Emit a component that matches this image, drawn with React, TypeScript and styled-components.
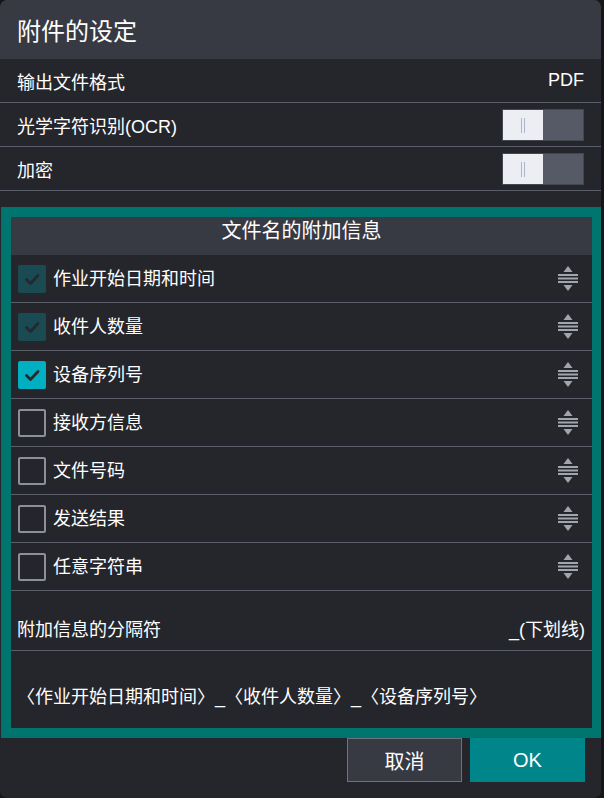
import React from "react";
import styled, { createGlobalStyle } from "styled-components";

const Global = createGlobalStyle`
  html, body { margin: 0; padding: 0; background: #161618; }
  body { font-family: "Liberation Sans", "Noto Sans CJK SC", sans-serif; color: #ffffff; }
`;

const Dialog = styled.div`
  width: 601px;
  height: 798px;
  background: #25262b;
  border-radius: 7px;
  overflow: hidden;
  display: flex;
  flex-direction: column;
`;

const Header = styled.div`
  height: 59px;
  flex: none;
  background: #373a43;
  display: flex;
  align-items: center;
  padding: 0 17px;
  font-size: 24px;
`;

const SettingRow = styled.div`
  height: 43px;
  flex: none;
  border-bottom: 1px solid #5a5e68;
  display: flex;
  align-items: center;
  justify-content: space-between;
  padding: 0 17px 0 17px;
  font-size: 18px;
`;

const Toggle = styled.div`
  width: 82px;
  height: 32px;
  box-sizing: border-box;
  border: 1px solid #434750;
  display: flex;
  background: #555a66;
  margin-top: 1px;
`;

const Thumb = styled.div`
  width: 40px;
  height: 100%;
  background: #eceef4;
  display: flex;
  align-items: center;
  justify-content: center;
  gap: 2px;
  span {
    display: block;
    width: 1px;
    height: 15px;
    background: #a9b5c8;
  }
`;

const Frame = styled.div`
  margin: 16px 0 0 1px;
  width: 601px;
  flex: none;
  box-sizing: border-box;
  border: 10px solid #007570;
  background: #25262b;
  display: flex;
  flex-direction: column;
`;

const FrameHeader = styled.div`
  height: 38px;
  background: #373a43;
  text-align: center;
  font-size: 20px;
  line-height: 29px;
`;

const ItemRow = styled.div`
  height: 47px;
  border-bottom: 1px solid #5a5e68;
  display: flex;
  align-items: center;
  padding: 0 13px 0 7px;
  font-size: 18px;
`;

const Box = styled.div<{ $state: "locked" | "on" | "off" }>`
  width: 28px;
  height: 28px;
  box-sizing: border-box;
  border-radius: 2px;
  flex: none;
  display: flex;
  align-items: center;
  justify-content: center;
  margin-right: 7px;
  background: ${(p) =>
    p.$state === "locked" ? "#1a4b53" : p.$state === "on" ? "#00afc0" : "transparent"};
  border: ${(p) => (p.$state === "off" ? "2px solid #8d9096" : "none")};
`;

const Label = styled.span`
  flex: 1;
  line-height: 24px;
`;

const SepRow = styled.div`
  border-bottom: 1px solid #5a5e68;
  display: flex;
  align-items: center;
  justify-content: space-between;
  padding: 14px 7px 0 6px;
  box-sizing: border-box;
  height: 60px;
  font-size: 18px;
`;

const PreviewRow = styled.div`
  height: 77px;
  box-sizing: border-box;
  display: flex;
  align-items: center;
  padding: 10px 6px 0 6px;
  font-size: 18px;
`;

const Footer = styled.div`
  display: flex;
  justify-content: flex-end;
  gap: 8px;
  padding: 0 16px 0 0;
`;

const Button = styled.button<{ $primary?: boolean }>`
  width: 115px;
  height: 44px;
  box-sizing: border-box;
  font-family: "Liberation Sans", "Noto Sans CJK SC", sans-serif;
  font-size: 20px;
  color: #ffffff;
  border: ${(p) => (p.$primary ? "none" : "1px solid #6e727b")};
  background: ${(p) => (p.$primary ? "#00868a" : "#373a43")};
  padding: 0;
  cursor: pointer;
`;

const Check = ({ color }: { color: string }) => (
  <svg width="28" height="28" viewBox="0 0 28 28">
    <path d="M8.5 14.5 L12.5 18.5 L20 10.5" fill="none" stroke={color} strokeWidth="2.8" strokeLinecap="round" strokeLinejoin="round" />
  </svg>
);

const SortIcon = () => (
  <svg width="22" height="28" viewBox="0 0 22 28">
    <path d="M11 1 L15.5 7 L6.5 7 Z" fill="#a2a5ab" />
    <rect x="1" y="9" width="20" height="2" fill="#a2a5ab" />
    <rect x="1" y="12.5" width="20" height="2" fill="#a2a5ab" />
    <rect x="1" y="16" width="20" height="2" fill="#a2a5ab" />
    <path d="M6.5 20 L15.5 20 L11 26 Z" fill="#a2a5ab" />
  </svg>
);

type Item = { label: string; state: "locked" | "on" | "off" };

const items: Item[] = [
  { label: "作业开始日期和时间", state: "locked" },
  { label: "收件人数量", state: "locked" },
  { label: "设备序列号", state: "on" },
  { label: "接收方信息", state: "off" },
  { label: "文件号码", state: "off" },
  { label: "发送结果", state: "off" },
  { label: "任意字符串", state: "off" },
];

const Switch = () => (
  <Toggle>
    <Thumb>
      <span />
      <span />
    </Thumb>
  </Toggle>
);

export default function App() {
  return (
    <>
      <Global />
      <Dialog>
        <Header>附件的设定</Header>
        <SettingRow>
          <span>输出文件格式</span>
          <span>PDF</span>
        </SettingRow>
        <SettingRow>
          <span>光学字符识别(OCR)</span>
          <Switch />
        </SettingRow>
        <SettingRow>
          <span>加密</span>
          <Switch />
        </SettingRow>
        <Frame>
          <FrameHeader>文件名的附加信息</FrameHeader>
          {items.map((it) => (
            <ItemRow key={it.label}>
              <Box $state={it.state}>
                {it.state !== "off" && <Check color="#25282e" />}
              </Box>
              <Label>{it.label}</Label>
              <SortIcon />
            </ItemRow>
          ))}
          <SepRow>
            <span>附加信息的分隔符</span>
            <span>_(下划线)</span>
          </SepRow>
          <PreviewRow>〈作业开始日期和时间〉_〈收件人数量〉_〈设备序列号〉</PreviewRow>
        </Frame>
        <Footer>
          <Button>取消</Button>
          <Button $primary>OK</Button>
        </Footer>
      </Dialog>
    </>
  );
}
